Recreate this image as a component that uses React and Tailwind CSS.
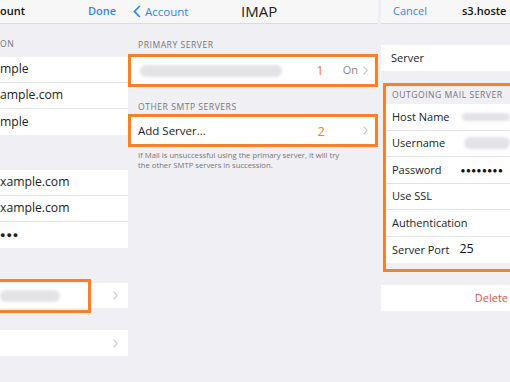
import React from 'react';

const ORANGE = 'outline-[3px] outline-[#f5822a]';

function Chevron({ className = '' }) {
  return (
    <svg width="5" height="9" viewBox="0 0 5 9" className={className}>
      <polyline points="0.6,0.6 4.2,4.5 0.6,8.4" fill="none" stroke="#c4c4c9" strokeWidth="1.1" />
    </svg>
  );
}

function Blob({ className = '' }) {
  return <div className={`rounded-full bg-[#e3e3e6] blur-[1.5px] ${className}`} />;
}

function Header({ children, className = '' }) {
  return (
    <div className={`flex items-end text-[8.6px] tracking-[0.06em] text-[#76767b] uppercase ${className}`}>
      {children}
    </div>
  );
}

function LeftPanel() {
  const rows1 = ['mple', 'ample.com', 'mple'];
  const rows2 = ['xample.com', 'xample.com'];
  return (
    <div className="w-[128px] shrink-0 flex flex-col">
      <div className="h-[24px] bg-[#f7f7f8] border-b border-[#dcdce0] flex items-center justify-between pr-[12px]">
        <span className="text-[11px] font-semibold text-[#111]">ount</span>
        <span className="text-[11px] font-semibold text-[#2f86f0]">Done</span>
      </div>
      <Header className="h-[33px] pb-[6px]">ON</Header>
      <div className="bg-white">
        {rows1.map((r, i) => (
          <div key={i} className={`h-[26px] flex items-center text-[12.2px] text-[#222] ${i < 2 ? 'border-b border-[#e2e2e6]' : ''}`}>{r}</div>
        ))}
      </div>
      <div className="h-[35px]" />
      <div className="bg-white">
        {rows2.map((r, i) => (
          <div key={i} className="h-[26px] flex items-center text-[12.2px] text-[#222] border-b border-[#e2e2e6]">{r}</div>
        ))}
        <div className="h-[26px] flex items-center text-[9px] tracking-[1px] text-[#222]">●●●</div>
      </div>
      <div className="h-[35px]" />
      <div className="bg-white h-[25px] flex items-center justify-between pr-[10px]">
        <div className={`w-[87px] h-[26px] flex items-center ${ORANGE} outline-offset-[1px]`}>
          <Blob className="w-[60px] h-[12px] ml-0" />
        </div>
        <Chevron />
      </div>
      <div className="h-[22px]" />
      <div className="bg-white h-[26px] flex items-center justify-end pr-[10px]">
        <Chevron />
      </div>
    </div>
  );
}

function MiddlePanel() {
  return (
    <div className="w-[250px] shrink-0 flex flex-col">
      <div className="h-[24px] bg-[#f7f7f8] border-b border-[#dcdce0] flex items-center relative">
        <div className="flex items-center gap-[4px] pl-[5px] text-[#2f86f0]">
          <svg width="8" height="13" viewBox="0 0 8 13">
            <polyline points="6.8,1 1.5,6.5 6.8,12" fill="none" stroke="#2f86f0" strokeWidth="1.8" />
          </svg>
          <span className="text-[11.5px]">Account</span>
        </div>
        <span className="absolute left-[113px] text-[15px] text-[#222]">IMAP</span>
      </div>
      <Header className="h-[33px] pb-[5px] pl-[10px]">Primary Server</Header>
      <div className={`bg-white h-[27px] flex items-center mx-[3px] pl-[9px] pr-[7px] ${ORANGE}`}>
        <Blob className="w-[142px] h-[12px]" />
        <span className="ml-auto text-[13px] text-[#f5822a] mr-[19px]">1</span>
        <span className="text-[11px] text-[#8a8a8f] mr-[5px]">On</span>
        <Chevron />
      </div>
      <Header className="h-[33px] pb-[3px] pl-[10px]">Other SMTP Servers</Header>
      <div className={`bg-white h-[27px] flex items-center mx-[3px] pl-[7px] pr-[7px] ${ORANGE}`}>
        <span className="text-[11.5px] text-[#222]">Add Server...</span>
        <span className="ml-auto text-[13px] text-[#f5822a] mr-[38px] mt-[3px]">2</span>
        <Chevron />
      </div>
      <p className="pl-[10px] pt-[7px] text-[7.7px] leading-[9.5px] text-[#76767b]">
        If Mail is unsuccessful using the primary server, it will try<br />the other SMTP servers in succession.
      </p>
    </div>
  );
}

function RightPanel() {
  const rows = [
    { label: 'Host Name', value: <Blob className="w-[56px] h-[8px] ml-[12px]" /> },
    { label: 'Username', value: <Blob className="w-[60px] h-[12px] ml-[19px]" /> },
    { label: 'Password', value: <span className="ml-[19px] text-[8px] tracking-[0.5px] text-[#111]">●●●●●●●●</span> },
    { label: 'Use SSL' },
    { label: 'Authentication' },
    { label: 'Server Port', value: <span className="ml-[10px] text-[12.5px] text-[#111]">25</span> },
  ];
  return (
    <div className="flex-1 flex flex-col min-w-0 ml-[3px]">
      <div className="h-[24px] bg-[#f7f7f8] border-b border-[#dcdce0] flex items-center pl-[12px]">
        <span className="text-[11px] text-[#2f86f0]">Cancel</span>
        <span className="ml-[35px] text-[11px] font-semibold text-[#111] whitespace-nowrap">s3.hoste</span>
      </div>
      <div className="h-[21px]" />
      <div className="bg-white h-[26px] flex items-center pl-[10px] text-[11px] text-[#222]">Server</div>
      <div className="h-[12px]" />
      <div className="ml-[2px] border-[3px] border-r-0 border-[#f5822a] flex flex-col pb-[6px]">
        <Header className="h-[18px] pb-[2px] pl-[6px]">Outgoing Mail Server</Header>
        <div className="bg-white">
          {rows.map((r, i) => (
            <div key={r.label} className={`h-[26.5px] flex items-center pl-[6px] text-[11px] text-[#222] whitespace-nowrap overflow-hidden ${i < rows.length - 1 ? 'border-b border-[#e2e2e6]' : ''}`}>
              <span>{r.label}</span>
              {r.value}
            </div>
          ))}
        </div>
      </div>
      <div className="h-[13px]" />
      <div className="bg-white h-[26px] flex items-center justify-end pr-[2px] text-[11px] text-[#e5534b]">Delete</div>
    </div>
  );
}

export default function App() {
  return (
    <div className="w-[510px] h-[382px] overflow-hidden bg-[#efeff4] flex" style={{ fontFamily: '"Open Sans", "Noto Sans", sans-serif' }}>
      <LeftPanel />
      <MiddlePanel />
      <RightPanel />
    </div>
  );
}
